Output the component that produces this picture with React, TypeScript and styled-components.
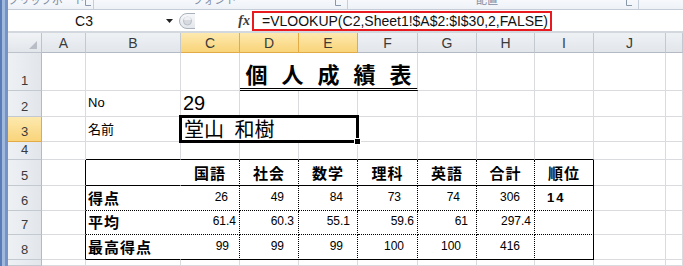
import React from "react";
import styled, { createGlobalStyle } from "styled-components";

type Line = "grid" | "solid" | "dotted" | "double" | "none";

const GlobalStyle = createGlobalStyle`
  html, body { margin: 0; padding: 0; background: #fff; overflow: hidden; }
  body { font-family: "Liberation Sans", "Noto Sans CJK JP", sans-serif; }
`;

const lineCss = (l: Line) => {
  switch (l) {
    case "solid":
      return "1px solid #000";
    case "dotted":
      return "1px dotted #000";
    case "double":
      return "3px double #000";
    case "none":
      return "1px solid #fff";
    default:
      return "1px solid #d9dbde";
  }
};

const Window = styled.div`
  display: flex;
  width: 683px;
  height: 266px;
  overflow: hidden;
`;

const FrameEdge = styled.div`
  flex: none;
  width: 8px;
  background: linear-gradient(
    to right,
    #5a7db8 0 2px,
    #9fb8de 2px 5px,
    #7593c6 5px 8px
  );
`;

const Main = styled.div`
  flex: 1;
  min-width: 0;
  display: flex;
  flex-direction: column;
`;

/* ---------- ribbon strip ---------- */
const Ribbon = styled.div`
  flex: none;
  height: 10px;
  box-sizing: border-box;
  display: flex;
  overflow: hidden;
  background: linear-gradient(#f6f8fb, #eef2f7);
  border-bottom: 1px solid #c4ccd7;
`;

const RibbonGroup = styled.div<{ $w?: number }>`
  flex: ${(p) => (p.$w ? "none" : "1")};
  width: ${(p) => (p.$w ? `${p.$w}px` : "auto")};
  box-sizing: border-box;
  display: flex;
  align-items: flex-start;
  border-right: ${(p) => (p.$w ? "1px solid #c6ced9" : "none")};
`;

const GroupLabel = styled.span`
  flex: 1;
  text-align: center;
  margin-top: -8px;
  font-family: "Noto Sans CJK JP", sans-serif;
  font-size: 11px;
  line-height: 14px;
  color: #7d8ca2;
  white-space: nowrap;
`;

const Launcher = styled.svg`
  flex: none;
  width: 7px;
  height: 6px;
  margin: 0 5px 0 0;
`;

/* ---------- formula bar ---------- */
const FormulaBar = styled.div`
  flex: none;
  height: 23px;
  box-sizing: border-box;
  padding-top: 1px;
  display: flex;
  background: #fff;
  border-bottom: 2px solid #d3d8df;
`;

const NameBox = styled.div`
  flex: none;
  width: 169px;
  display: flex;
  align-items: center;
`;

const NameText = styled.span`
  flex: 1;
  text-align: center;
  font-size: 14px;
  color: #111;
`;

const DropArrow = styled.svg`
  flex: none;
  width: 7px;
  height: 4px;
  margin: 0 4px 0 6px;
`;

const Grip = styled.svg`
  flex: none;
  width: 19px;
  height: 20px;
`;

const FxArea = styled.div`
  flex: none;
  width: 56px;
  display: flex;
  align-items: center;
  justify-content: flex-end;
  padding-right: 2px;
  box-sizing: border-box;
  font-family: "Liberation Serif", serif;
  font-style: italic;
  font-weight: 700;
  font-size: 14px;
  color: #3c3c3c;
`;

const FormulaBox = styled.div`
  flex: none;
  width: 300px;
  box-sizing: border-box;
  border: 2px solid #e8191f;
  display: flex;
  align-items: center;
  padding-left: 8px;
  font-size: 14px;
  color: #111;
  white-space: nowrap;
`;

/* ---------- sheet ---------- */
const Sheet = styled.div`
  flex: 1;
  min-height: 0;
  overflow: hidden;
  display: grid;
  grid-template-columns: 34px 44px 95px 59px 59px 59px 60px 59px 58px 59px 72px 1fr;
  grid-template-rows: 20px 38px 26px 25px 18px 26px 25px 24px 25px 1fr;
`;

const Corner = styled.div`
  box-sizing: border-box;
  display: flex;
  align-items: flex-end;
  justify-content: flex-end;
  padding: 0 4px 3px 0;
  background: linear-gradient(#f1f3f6, #e2e6eb);
  border-right: 1px solid #bcc3cc;
  border-bottom: 1px solid #bcc3cc;
`;

const ColHead = styled.div<{ $sel?: boolean }>`
  box-sizing: border-box;
  display: flex;
  align-items: flex-end;
  justify-content: center;
  padding-bottom: 1px;
  font-size: 14px;
  color: #3a3a3a;
  background: ${(p) =>
    p.$sel
      ? "linear-gradient(#fde9ae, #f9d47a)"
      : "linear-gradient(#eef1f4, #e2e6eb)"};
  border-right: 1px solid ${(p) => (p.$sel ? "#e3ab45" : "#c3c9d1")};
  border-bottom: 1px solid ${(p) => (p.$sel ? "#e3ab45" : "#b3bac4")};
`;

const RowHead = styled.div<{ $sel?: boolean }>`
  box-sizing: border-box;
  display: flex;
  align-items: flex-end;
  justify-content: center;
  padding-bottom: 2px;
  font-size: 13px;
  color: #3a3a3a;
  background: ${(p) =>
    p.$sel
      ? "linear-gradient(#fde9ae, #f9d47a)"
      : "linear-gradient(to right, #eef1f4, #e2e6eb)"};
  border-right: 1px solid ${(p) => (p.$sel ? "#e3ab45" : "#b3bac4")};
  border-bottom: 1px solid ${(p) => (p.$sel ? "#e3ab45" : "#c3c9d1")};
  overflow: hidden;
`;

const Cell = styled.div<{
  $span: number;
  $right: Line;
  $bottom: Line;
  $justify: string;
  $padR: number;
  $padL: number;
  $padB: number;
}>`
  position: relative;
  box-sizing: border-box;
  grid-column: span ${(p) => p.$span};
  display: flex;
  align-items: flex-end;
  justify-content: ${(p) => p.$justify};
  padding: 0 ${(p) => p.$padR}px ${(p) => p.$padB}px ${(p) => p.$padL}px;
  border-right: ${(p) => lineCss(p.$right)};
  border-bottom: ${(p) => lineCss(p.$bottom)};
  white-space: nowrap;
  background: #fff;
`;

const TitleText = styled.span`
  font-family: "Noto Sans CJK JP", sans-serif;
  font-weight: 700;
  font-size: 22px;
  line-height: 26px;
  word-spacing: 9px;
  color: #000;
`;

const PlainText = styled.span`
  font-family: "Liberation Sans", "Noto Sans CJK JP", sans-serif;
  font-size: 13px;
  line-height: 16px;
  color: #000;
`;

const BigNum = styled.span`
  font-family: "Liberation Sans", sans-serif;
  font-size: 20px;
  line-height: 22px;
  color: #000;
`;

const NameValue = styled.span`
  font-family: "Noto Sans CJK JP", sans-serif;
  font-size: 20px;
  line-height: 24px;
  word-spacing: 6px;
  color: #000;
`;

const BoldLabel = styled.span`
  font-family: "Noto Sans CJK JP", sans-serif;
  font-weight: 700;
  font-size: 15px;
  line-height: 18px;
  letter-spacing: 1px;
  color: #000;
`;

const NumText = styled.span<{ $bold?: boolean }>`
  font-family: "Liberation Sans", sans-serif;
  font-size: ${(p) => (p.$bold ? 13 : 12)}px;
  font-weight: ${(p) => (p.$bold ? 700 : 400)};
  letter-spacing: ${(p) => (p.$bold ? 2 : 0)}px;
  line-height: 15px;
  color: #000;
`;

const Selection = styled.div`
  position: absolute;
  left: -2px;
  top: -2px;
  right: -2px;
  bottom: -2px;
  border: 3px solid #000;
  pointer-events: none;
  z-index: 2;
`;

const FillHandle = styled.div`
  position: absolute;
  right: -5px;
  bottom: -5px;
  width: 5px;
  height: 5px;
  background: #000;
  border: 1px solid #fff;
`;

/* ---------- data ---------- */
const COLS = ["A", "B", "C", "D", "E", "F", "G", "H", "I", "J", ""];
const SELECTED_COLS = [2, 3, 4];
const SELECTED_ROW = 3;

const rightLine = (r: number, c: number): Line => {
  if (r >= 5 && r <= 8) {
    if (c === 0 || c === 8) return "solid";
    if (c === 1) return "none";
    if (c >= 2 && c <= 7) return "dotted";
  }
  return "grid";
};

const bottomLine = (r: number, c: number, span: number): Line => {
  if (c >= 1 && c <= 8) {
    if (r === 4 || r === 5 || r === 8) return "solid";
    if (r === 6 || r === 7) return "dotted";
  }
  if (r === 1 && c === 3 && span === 3) return "double";
  return "grid";
};

type Spec = {
  c: number;
  span?: number;
  justify?: string;
  padR?: number;
  padL?: number;
  padB?: number;
  node?: React.ReactNode;
  selected?: boolean;
};

const subjects = ["国語", "社会", "数学", "理科", "英語", "合計", "順位"];

const scoreRows: { label: string; values: [string, number][] }[] = [
  {
    label: "得点",
    values: [
      ["26", 11],
      ["49", 14],
      ["84", 14],
      ["73", 16],
      ["74", 16],
      ["306", 14],
    ],
  },
  {
    label: "平均",
    values: [
      ["61.4", 3],
      ["60.3", 4],
      ["55.1", 7],
      ["59.6", 3],
      ["61", 8],
      ["297.4", 3],
    ],
  },
  {
    label: "最高得点",
    values: [
      ["99", 10],
      ["99", 14],
      ["99", 14],
      ["100", 13],
      ["100", 15],
      ["416", 14],
    ],
  },
];

const rowSpecs: Record<number, Spec[]> = {
  1: [{ c: 3, span: 3, justify: "center", padB: 2, node: <TitleText>個 人 成 績 表</TitleText> }],
  2: [
    { c: 1, padL: 2, padB: 5, node: <PlainText>No</PlainText> },
    { c: 2, padL: 2, padB: 2, node: <BigNum>29</BigNum> },
  ],
  3: [
    { c: 1, padL: 2, padB: 3, node: <PlainText>名前</PlainText> },
    { c: 2, span: 3, padL: 3, padB: 0, selected: true, node: <NameValue>堂山 和樹</NameValue> },
  ],
  5: subjects.map((s, i) => ({
    c: 2 + i,
    justify: "center",
    padB: 3,
    node: <BoldLabel>{s}</BoldLabel>,
  })),
};

scoreRows.forEach((row, ri) => {
  const r = 6 + ri;
  const specs: Spec[] = [
    { c: 1, padL: 2, padB: 3, node: <BoldLabel>{row.label}</BoldLabel> },
  ];
  row.values.forEach(([v, pad], i) => {
    specs.push({
      c: 2 + i,
      justify: "flex-end",
      padR: pad,
      padB: 5,
      node: <NumText>{v}</NumText>,
    });
  });
  if (ri === 0) {
    specs.push({ c: 8, padL: 12, padB: 5, node: <NumText $bold>14</NumText> });
  }
  rowSpecs[r] = specs;
});

const buildRow = (r: number) => {
  const specs = rowSpecs[r] ?? [];
  const out: React.ReactNode[] = [];
  let c = 0;
  while (c < COLS.length) {
    const spec = specs.find((s) => s.c === c);
    const span = spec?.span ?? 1;
    const last = c + span - 1;
    out.push(
      <Cell
        key={`${r}-${c}`}
        $span={span}
        $right={rightLine(r, last)}
        $bottom={bottomLine(r, c, span)}
        $justify={spec?.justify ?? "flex-start"}
        $padR={spec?.padR ?? 2}
        $padL={spec?.padL ?? 2}
        $padB={spec?.padB ?? 2}
      >
        {spec?.node}
        {spec?.selected && (
          <Selection>
            <FillHandle />
          </Selection>
        )}
      </Cell>
    );
    c += span;
  }
  return out;
};

const App: React.FC = () => (
  <>
    <GlobalStyle />
    <Window>
      <FrameEdge />
      <Main>
        <Ribbon>
          <RibbonGroup $w={86}>
            <GroupLabel>クリップボード</GroupLabel>
            <Launcher viewBox="0 0 7 6">
              <path d="M0.5 0 V5.5 H6" fill="none" stroke="#8a98ab" />
            </Launcher>
          </RibbonGroup>
          <RibbonGroup $w={254}>
            <GroupLabel>フォント</GroupLabel>
            <Launcher viewBox="0 0 7 6">
              <path d="M0.5 0 V5.5 H6" fill="none" stroke="#8a98ab" />
            </Launcher>
          </RibbonGroup>
          <RibbonGroup $w={291}>
            <GroupLabel>配置</GroupLabel>
            <Launcher viewBox="0 0 7 6">
              <path d="M0.5 0 V5.5 H6" fill="none" stroke="#8a98ab" />
            </Launcher>
          </RibbonGroup>
          <RibbonGroup />
        </Ribbon>

        <FormulaBar>
          <NameBox>
            <NameText>C3</NameText>
            <DropArrow viewBox="0 0 7 4">
              <path d="M0 0 H7 L3.5 4 Z" fill="#222" />
            </DropArrow>
          </NameBox>
          <Grip viewBox="0 0 19 20">
            <defs>
              <linearGradient id="gripFill" x1="0" y1="0" x2="0" y2="1">
                <stop offset="0" stopColor="#f7f8fa" />
                <stop offset="1" stopColor="#e3e6ea" />
              </linearGradient>
            </defs>
            <path
              d="M18 2.5 H10 A7.5 7.5 0 0 0 10 17.5 H18"
              fill="url(#gripFill)"
              stroke="#a9b1bc"
            />
            <circle cx="10.5" cy="10" r="4" fill="#d7dbe0" stroke="#b9c0c9" />
            <path d="M7 9 A3.5 3.5 0 0 1 14 9 Z" fill="#eef0f3" />
          </Grip>
          <FxArea>fx</FxArea>
          <FormulaBox>=VLOOKUP(C2,Sheet1!$A$2:$I$30,2,FALSE)</FormulaBox>
        </FormulaBar>

        <Sheet>
          <Corner>
            <svg width="8" height="8" viewBox="0 0 8 8">
              <path d="M8 0 V8 H0 Z" fill="#b9bec6" />
            </svg>
          </Corner>
          {COLS.map((name, i) => (
            <ColHead key={`h${i}`} $sel={SELECTED_COLS.includes(i)}>
              {name}
            </ColHead>
          ))}
          {[1, 2, 3, 4, 5, 6, 7, 8, 9].map((r) => (
            <React.Fragment key={`r${r}`}>
              <RowHead $sel={r === SELECTED_ROW}>{r === 9 ? "" : r}</RowHead>
              {buildRow(r)}
            </React.Fragment>
          ))}
        </Sheet>
      </Main>
    </Window>
  </>
);

export default App;
